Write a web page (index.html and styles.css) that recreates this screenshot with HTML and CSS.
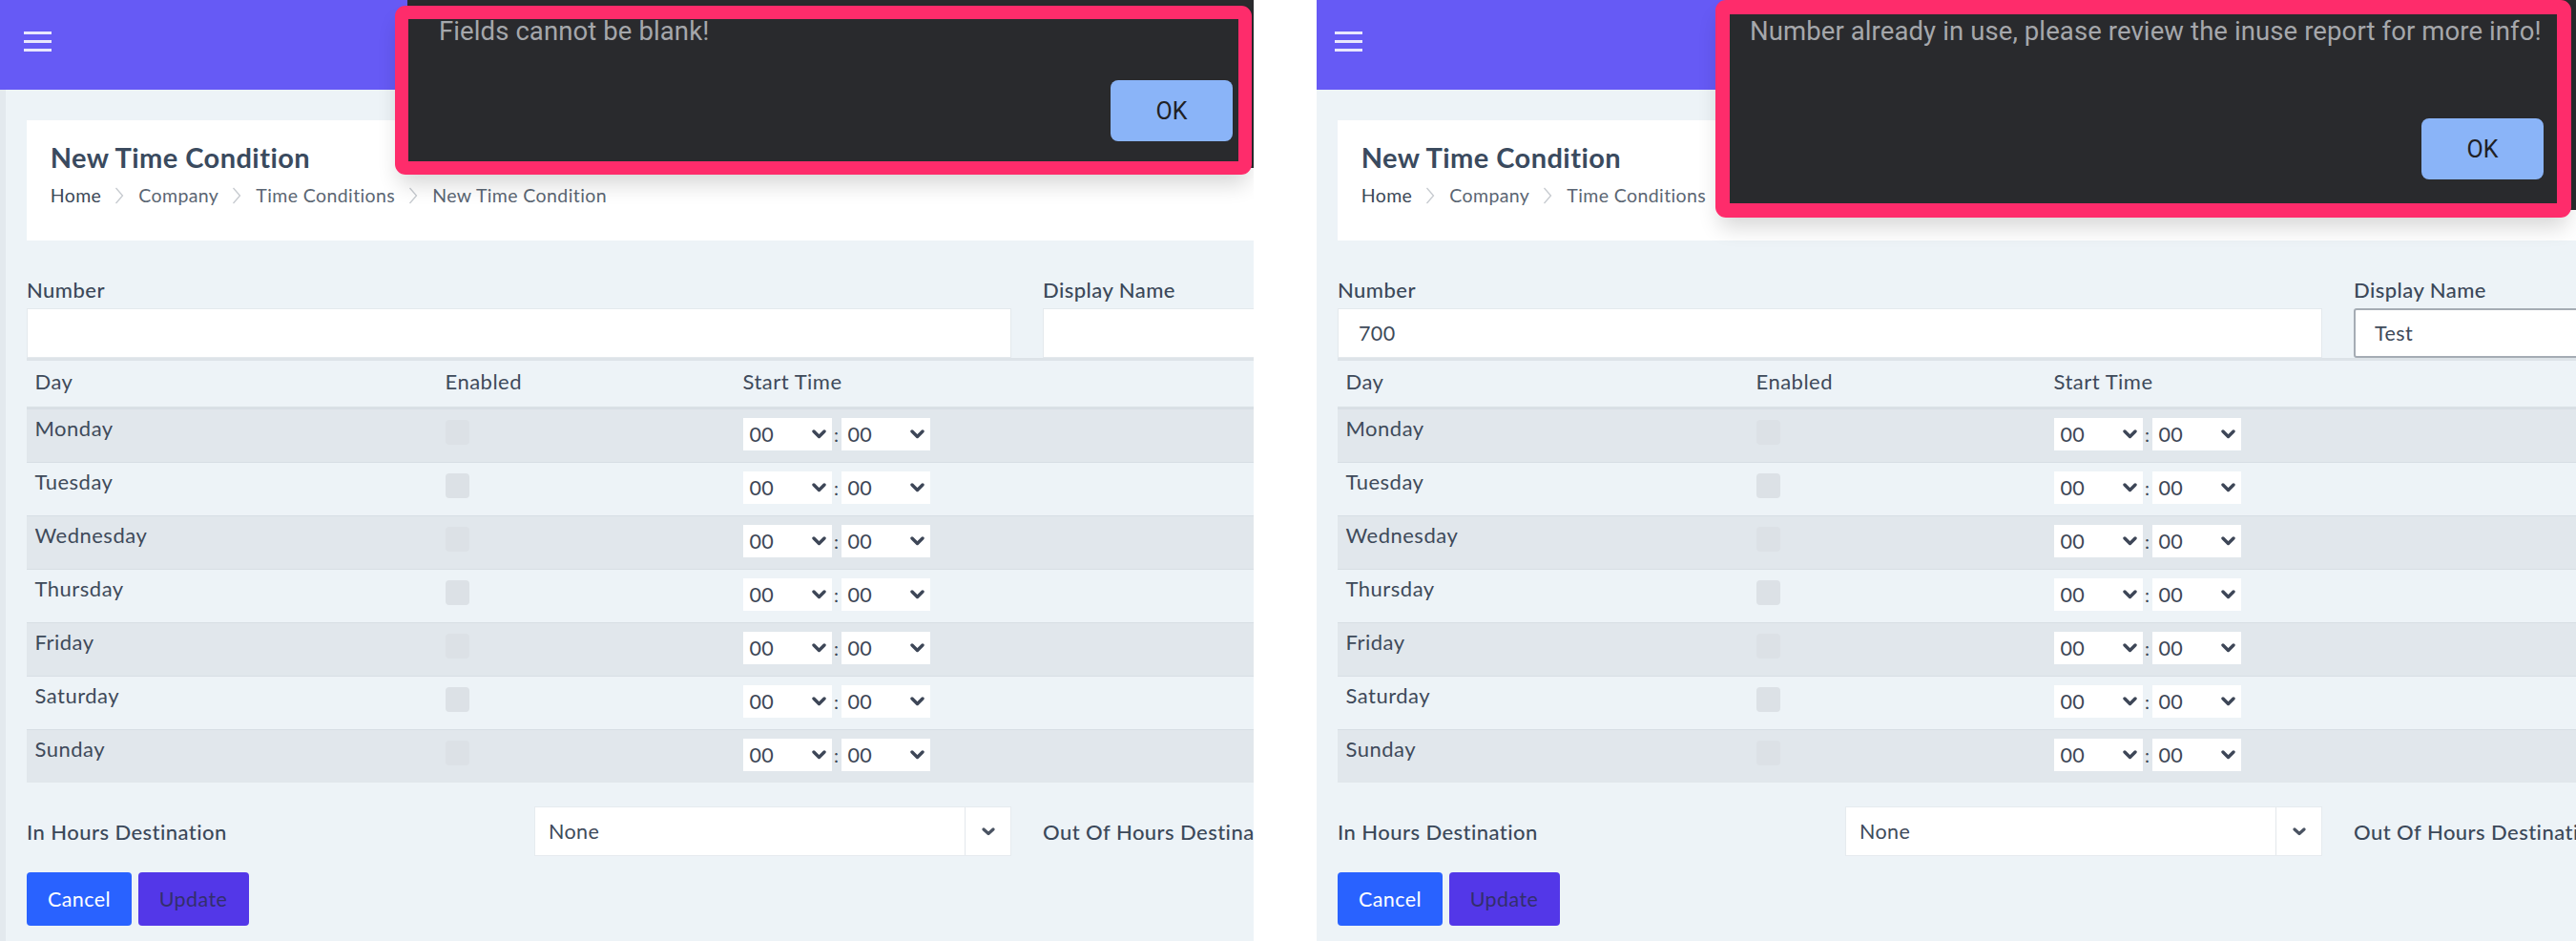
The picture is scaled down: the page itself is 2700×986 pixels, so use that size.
FILE: index.html
```html
<!DOCTYPE html>
<html>
<head>
<meta charset="utf-8">
<title>New Time Condition</title>
<link rel="stylesheet" href="styles.css">
</head>
<body>
<div class="shot">

  <section class="panel panel-left">
    <div class="page">
      <header class="topbar">
        <svg class="burger" width="29" height="22" viewBox="0 0 29 22"><rect x="0" y="0" width="29" height="3"/><rect x="0" y="9" width="29" height="3"/><rect x="0" y="18" width="29" height="3"/></svg>
      </header>
      <main class="content">
        <div class="card">
          <h1 class="title">New Time Condition</h1>
          <nav class="crumbs">
            <span class="crumb crumb-home">Home</span>
            <svg class="sep" width="10" height="18" viewBox="0 0 10 18"><polyline points="1.5,1 8.5,9 1.5,17"/></svg>
            <span class="crumb">Company</span>
            <svg class="sep" width="10" height="18" viewBox="0 0 10 18"><polyline points="1.5,1 8.5,9 1.5,17"/></svg>
            <span class="crumb">Time Conditions</span>
            <svg class="sep" width="10" height="18" viewBox="0 0 10 18"><polyline points="1.5,1 8.5,9 1.5,17"/></svg>
            <span class="crumb">New Time Condition</span>
          </nav>
        </div>

        <div class="fields">
          <div class="field">
            <div class="label">Number</div>
            <div class="input"></div>
          </div>
          <div class="field">
            <div class="label">Display Name</div>
            <div class="input"></div>
          </div>
        </div>

        <div class="days">
          <div class="row head"><div class="cell">Day</div><div class="cell">Enabled</div><div class="cell">Start Time</div></div>
          <div class="row drow odd"><div class="cell dname">Monday</div><div class="cell"><div class="check"></div></div><div class="cell"><div class="time"><div class="sel"><span>00</span><svg class="chev" width="15" height="10" viewBox="0 0 15 10"><polyline points="2,2 7.5,7.5 13,2"/></svg></div><span class="colon">:</span><div class="sel"><span>00</span><svg class="chev" width="15" height="10" viewBox="0 0 15 10"><polyline points="2,2 7.5,7.5 13,2"/></svg></div></div></div></div>
          <div class="row drow"><div class="cell dname">Tuesday</div><div class="cell"><div class="check"></div></div><div class="cell"><div class="time"><div class="sel"><span>00</span><svg class="chev" width="15" height="10" viewBox="0 0 15 10"><polyline points="2,2 7.5,7.5 13,2"/></svg></div><span class="colon">:</span><div class="sel"><span>00</span><svg class="chev" width="15" height="10" viewBox="0 0 15 10"><polyline points="2,2 7.5,7.5 13,2"/></svg></div></div></div></div>
          <div class="row drow odd"><div class="cell dname">Wednesday</div><div class="cell"><div class="check"></div></div><div class="cell"><div class="time"><div class="sel"><span>00</span><svg class="chev" width="15" height="10" viewBox="0 0 15 10"><polyline points="2,2 7.5,7.5 13,2"/></svg></div><span class="colon">:</span><div class="sel"><span>00</span><svg class="chev" width="15" height="10" viewBox="0 0 15 10"><polyline points="2,2 7.5,7.5 13,2"/></svg></div></div></div></div>
          <div class="row drow"><div class="cell dname">Thursday</div><div class="cell"><div class="check"></div></div><div class="cell"><div class="time"><div class="sel"><span>00</span><svg class="chev" width="15" height="10" viewBox="0 0 15 10"><polyline points="2,2 7.5,7.5 13,2"/></svg></div><span class="colon">:</span><div class="sel"><span>00</span><svg class="chev" width="15" height="10" viewBox="0 0 15 10"><polyline points="2,2 7.5,7.5 13,2"/></svg></div></div></div></div>
          <div class="row drow odd"><div class="cell dname">Friday</div><div class="cell"><div class="check"></div></div><div class="cell"><div class="time"><div class="sel"><span>00</span><svg class="chev" width="15" height="10" viewBox="0 0 15 10"><polyline points="2,2 7.5,7.5 13,2"/></svg></div><span class="colon">:</span><div class="sel"><span>00</span><svg class="chev" width="15" height="10" viewBox="0 0 15 10"><polyline points="2,2 7.5,7.5 13,2"/></svg></div></div></div></div>
          <div class="row drow"><div class="cell dname">Saturday</div><div class="cell"><div class="check"></div></div><div class="cell"><div class="time"><div class="sel"><span>00</span><svg class="chev" width="15" height="10" viewBox="0 0 15 10"><polyline points="2,2 7.5,7.5 13,2"/></svg></div><span class="colon">:</span><div class="sel"><span>00</span><svg class="chev" width="15" height="10" viewBox="0 0 15 10"><polyline points="2,2 7.5,7.5 13,2"/></svg></div></div></div></div>
          <div class="row drow odd"><div class="cell dname">Sunday</div><div class="cell"><div class="check"></div></div><div class="cell"><div class="time"><div class="sel"><span>00</span><svg class="chev" width="15" height="10" viewBox="0 0 15 10"><polyline points="2,2 7.5,7.5 13,2"/></svg></div><span class="colon">:</span><div class="sel"><span>00</span><svg class="chev" width="15" height="10" viewBox="0 0 15 10"><polyline points="2,2 7.5,7.5 13,2"/></svg></div></div></div></div>
        </div>

        <div class="dest">
          <div class="label dest-label">In Hours Destination</div>
          <div class="dsel"><span class="dsel-text">None</span><span class="dsel-btn"><svg width="14" height="9" viewBox="0 0 14 9"><polyline points="2,2 7,6.5 12,2"/></svg></span></div>
          <div class="label dest-label2">Out Of Hours Destination</div>
        </div>

        <div class="actions">
          <button class="btn btn-cancel">Cancel</button>
          <button class="btn btn-update">Update</button>
        </div>
      </main>
    </div>

    <div class="dialog dialog-left">
      <p class="dialog-msg">Fields cannot be blank!</p>
      <button class="ok ok-left">OK</button>
    </div>
    <div class="mark mark-left"></div>
  </section>

  <section class="panel panel-right">
    <div class="page">
      <header class="topbar">
        <svg class="burger" width="29" height="22" viewBox="0 0 29 22"><rect x="0" y="0" width="29" height="3"/><rect x="0" y="9" width="29" height="3"/><rect x="0" y="18" width="29" height="3"/></svg>
      </header>
      <main class="content">
        <div class="card">
          <h1 class="title">New Time Condition</h1>
          <nav class="crumbs">
            <span class="crumb crumb-home">Home</span>
            <svg class="sep" width="10" height="18" viewBox="0 0 10 18"><polyline points="1.5,1 8.5,9 1.5,17"/></svg>
            <span class="crumb">Company</span>
            <svg class="sep" width="10" height="18" viewBox="0 0 10 18"><polyline points="1.5,1 8.5,9 1.5,17"/></svg>
            <span class="crumb">Time Conditions</span>
            <svg class="sep" width="10" height="18" viewBox="0 0 10 18"><polyline points="1.5,1 8.5,9 1.5,17"/></svg>
            <span class="crumb">New Time Condition</span>
          </nav>
        </div>

        <div class="fields">
          <div class="field">
            <div class="label">Number</div>
            <div class="input">700</div>
          </div>
          <div class="field">
            <div class="label">Display Name</div>
            <div class="input input-focus">Test</div>
          </div>
        </div>

        <div class="days">
          <div class="row head"><div class="cell">Day</div><div class="cell">Enabled</div><div class="cell">Start Time</div></div>
          <div class="row drow odd"><div class="cell dname">Monday</div><div class="cell"><div class="check"></div></div><div class="cell"><div class="time"><div class="sel"><span>00</span><svg class="chev" width="15" height="10" viewBox="0 0 15 10"><polyline points="2,2 7.5,7.5 13,2"/></svg></div><span class="colon">:</span><div class="sel"><span>00</span><svg class="chev" width="15" height="10" viewBox="0 0 15 10"><polyline points="2,2 7.5,7.5 13,2"/></svg></div></div></div></div>
          <div class="row drow"><div class="cell dname">Tuesday</div><div class="cell"><div class="check"></div></div><div class="cell"><div class="time"><div class="sel"><span>00</span><svg class="chev" width="15" height="10" viewBox="0 0 15 10"><polyline points="2,2 7.5,7.5 13,2"/></svg></div><span class="colon">:</span><div class="sel"><span>00</span><svg class="chev" width="15" height="10" viewBox="0 0 15 10"><polyline points="2,2 7.5,7.5 13,2"/></svg></div></div></div></div>
          <div class="row drow odd"><div class="cell dname">Wednesday</div><div class="cell"><div class="check"></div></div><div class="cell"><div class="time"><div class="sel"><span>00</span><svg class="chev" width="15" height="10" viewBox="0 0 15 10"><polyline points="2,2 7.5,7.5 13,2"/></svg></div><span class="colon">:</span><div class="sel"><span>00</span><svg class="chev" width="15" height="10" viewBox="0 0 15 10"><polyline points="2,2 7.5,7.5 13,2"/></svg></div></div></div></div>
          <div class="row drow"><div class="cell dname">Thursday</div><div class="cell"><div class="check"></div></div><div class="cell"><div class="time"><div class="sel"><span>00</span><svg class="chev" width="15" height="10" viewBox="0 0 15 10"><polyline points="2,2 7.5,7.5 13,2"/></svg></div><span class="colon">:</span><div class="sel"><span>00</span><svg class="chev" width="15" height="10" viewBox="0 0 15 10"><polyline points="2,2 7.5,7.5 13,2"/></svg></div></div></div></div>
          <div class="row drow odd"><div class="cell dname">Friday</div><div class="cell"><div class="check"></div></div><div class="cell"><div class="time"><div class="sel"><span>00</span><svg class="chev" width="15" height="10" viewBox="0 0 15 10"><polyline points="2,2 7.5,7.5 13,2"/></svg></div><span class="colon">:</span><div class="sel"><span>00</span><svg class="chev" width="15" height="10" viewBox="0 0 15 10"><polyline points="2,2 7.5,7.5 13,2"/></svg></div></div></div></div>
          <div class="row drow"><div class="cell dname">Saturday</div><div class="cell"><div class="check"></div></div><div class="cell"><div class="time"><div class="sel"><span>00</span><svg class="chev" width="15" height="10" viewBox="0 0 15 10"><polyline points="2,2 7.5,7.5 13,2"/></svg></div><span class="colon">:</span><div class="sel"><span>00</span><svg class="chev" width="15" height="10" viewBox="0 0 15 10"><polyline points="2,2 7.5,7.5 13,2"/></svg></div></div></div></div>
          <div class="row drow odd"><div class="cell dname">Sunday</div><div class="cell"><div class="check"></div></div><div class="cell"><div class="time"><div class="sel"><span>00</span><svg class="chev" width="15" height="10" viewBox="0 0 15 10"><polyline points="2,2 7.5,7.5 13,2"/></svg></div><span class="colon">:</span><div class="sel"><span>00</span><svg class="chev" width="15" height="10" viewBox="0 0 15 10"><polyline points="2,2 7.5,7.5 13,2"/></svg></div></div></div></div>
        </div>

        <div class="dest">
          <div class="label dest-label">In Hours Destination</div>
          <div class="dsel"><span class="dsel-text">None</span><span class="dsel-btn"><svg width="14" height="9" viewBox="0 0 14 9"><polyline points="2,2 7,6.5 12,2"/></svg></span></div>
          <div class="label dest-label2">Out Of Hours Destination</div>
        </div>

        <div class="actions">
          <button class="btn btn-cancel">Cancel</button>
          <button class="btn btn-update">Update</button>
        </div>
      </main>
    </div>

    <div class="dialog dialog-right">
      <p class="dialog-msg">Number already in use, please review the inuse report for more info!</p>
      <button class="ok ok-right">OK</button>
    </div>
    <div class="mark mark-right"></div>
  </section>

</div>
</body>
</html>
```

FILE: styles.css
```css
* { box-sizing: border-box; margin: 0; padding: 0; }

body {
  background: #ffffff;
  font-family: Lato, "Noto Sans", sans-serif;
  color: #3d4a5a;
  width: 2700px;
  height: 986px;
  overflow: hidden;
}

.shot {
  display: flex;
  gap: 66px;
  height: 986px;
}

.panel {
  position: relative;
  overflow: hidden;
  height: 986px;
  flex: none;
}

.panel-left {
  width: 1314px;
  padding-left: 6px;
  background: linear-gradient(#665af5 0, #665af5 94px, #e3e9ee 94px);
}

.panel-right {
  width: 1320px;
}

.page {
  width: 2200px;
  height: 986px;
  background: #edf3f7;
  letter-spacing: 0.4px;
}

/* top bar */
.topbar {
  height: 94px;
  background: #665af5;
  padding: 33px 0 0 18.5px;
}

.burger { display: block; fill: #e9e7fd; }

/* content */
.content {
  padding: 32px 22px 0 22px;
}

.card {
  background: #ffffff;
  height: 126px;
  padding: 21px 0 0 24.7px;
}

.title {
  font-size: 29px;
  line-height: 35px;
  font-weight: 700;
  color: #3a4a5e;
  letter-spacing: 0.45px;
}

.crumbs {
  margin-top: 11px;
  display: flex;
  align-items: center;
  font-size: 19.5px;
  line-height: 23px;
  color: #5b6673;
  letter-spacing: 0.4px;
}

.crumb-home { color: #3c4858; }

.sep {
  margin: 0 15px 0 14px;
  fill: none;
  stroke: #c6cacf;
  stroke-width: 1.3;
}

/* fields */
.fields {
  margin-top: 39px;
  display: grid;
  grid-template-columns: 1032px 1fr;
  column-gap: 33px;
}

.label {
  font-size: 22px;
  line-height: 25px;
  font-weight: 500;
  color: #3b4859;
  letter-spacing: 0.45px;
}

.field .label { margin-bottom: 7px; }

.input {
  height: 52px;
  background: #ffffff;
  border: 1px solid #e4e9ed;
  display: flex;
  align-items: center;
  padding-left: 21px;
  font-size: 21.5px;
  color: #3e4a5a;
}

.input-focus {
  border: 2px solid #a5acb4;
  border-radius: 3px;
  padding-left: 20px;
}

/* day table */
.days {
  border-top: 3px solid #dde3e8;
}

.row {
  display: grid;
  grid-template-columns: 430px 312px 1fr;
  align-items: start;
}

.cell {
  padding-left: 8.5px;
  font-size: 22px;
  line-height: 26px;
  color: #3e4a5a;
  letter-spacing: 0.5px;
}

.head {
  height: 50px;
  border-bottom: 2px solid #d9e0e5;
  padding-top: 8.5px;
}

.drow {
  height: 56px;
  border-top: 1px solid #d7dee4;
}

.drow.odd { background: #e1e7ec; }

.dname { padding-top: 7px; }

.check {
  margin-top: 11px;
  width: 25px;
  height: 26px;
  border-radius: 4px;
  background: #dce1e6;
}

.time {
  margin-top: 9px;
  display: flex;
  align-items: center;
}

.sel {
  width: 93px;
  height: 34px;
  background: #ffffff;
  display: flex;
  align-items: center;
  justify-content: space-between;
  padding: 0 6px 0 7px;
  font-size: 21.5px;
  color: #3d4756;
  letter-spacing: 0.3px;
}

.chev {
  fill: none;
  stroke: #3d4657;
  stroke-width: 3.4;
  stroke-linecap: round;
  stroke-linejoin: round;
}

.colon {
  width: 10px;
  text-align: center;
  font-size: 20px;
  color: #3d4756;
  letter-spacing: 0;
}

/* destination row */
.dest {
  margin-top: 25px;
  display: flex;
  align-items: center;
}

.dest-label { width: 532px; }

.dsel {
  width: 500px;
  height: 52px;
  background: #ffffff;
  border: 1px solid #e6ebef;
  display: flex;
}

.dsel-text {
  flex: 1;
  padding-left: 14px;
  display: flex;
  align-items: center;
  font-size: 21.5px;
  color: #3e4a5a;
}

.dsel-btn {
  width: 48px;
  border-left: 1px solid #e3e8ec;
  display: flex;
  align-items: center;
  justify-content: center;
}

.dsel-btn svg {
  fill: none;
  stroke: #4a5362;
  stroke-width: 3.2;
  stroke-linecap: round;
  stroke-linejoin: round;
}

.dest-label2 {
  margin-left: 33px;
  white-space: nowrap;
}

/* buttons */
.actions {
  margin-top: 17px;
  display: flex;
  gap: 6.5px;
}

.btn {
  height: 56px;
  border: none;
  border-radius: 4px;
  font-family: Lato, "Noto Sans", sans-serif;
  font-size: 21.5px;
  letter-spacing: 0.4px;
}

.btn-cancel {
  width: 110px;
  background: #2962ff;
  color: #ffffff;
}

.btn-update {
  width: 116px;
  background: #5337e8;
  color: #332f6b;
}

/* alert dialogs */
.dialog {
  position: absolute;
  top: 0;
  background: #292a2d;
  display: flex;
  flex-direction: column;
  align-items: flex-start;
  font-family: Roboto, "Liberation Sans", sans-serif;
}

.dialog-left {
  left: 427px;
  width: 887px;
  height: 176px;
  padding: 18px 22px 0 33px;
}

.dialog-right {
  left: 432px;
  width: 888px;
  height: 220px;
  padding: 18px 34px 0 22px;
}

.dialog-msg {
  font-size: 27.5px;
  line-height: 30px;
  color: #a5a7ab;
  white-space: nowrap;
  letter-spacing: 0.1px;
}

.ok {
  align-self: flex-end;
  width: 128px;
  height: 64px;
  border: none;
  border-radius: 8px;
  background: #8ab4f8;
  color: #202124;
  font-family: Roboto, "Liberation Sans", sans-serif;
  font-size: 25px;
}

.ok-left { margin-top: 36px; }
.ok-right { margin-top: 76px; }

/* pink highlight frames drawn over the screenshots */
.mark {
  position: absolute;
  border: 14px solid #fe2c6b;
  border-radius: 11px;
  box-shadow: 0 14px 22px -4px rgba(0, 0, 0, 0.16);
}

.mark-left {
  left: 414px;
  top: 6px;
  width: 898px;
  height: 177px;
}

.mark-right {
  left: 418px;
  top: 0;
  width: 897px;
  height: 228px;
  border-width: 15px;
}
```
